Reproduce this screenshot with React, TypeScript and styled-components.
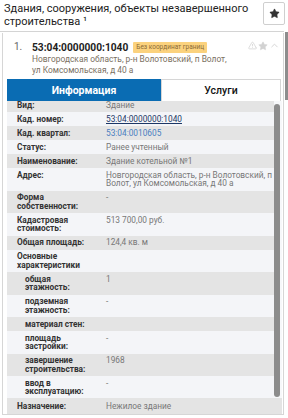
import React from 'react';
import styled, { createGlobalStyle } from 'styled-components';
import { Star, TriangleAlert, ChevronUp } from 'lucide-react';

const GlobalStyle = createGlobalStyle`
  html, body {
    margin: 0;
    padding: 0;
    background: #fff;
  }
  body {
    font-family: Roboto, "Open Sans", "DejaVu Sans", sans-serif;
    color: #222;
  }
`;

const Page = styled.div`
  width: 288px;
  height: 418px;
  overflow: hidden;
  background: #fff;
`;

const Header = styled.div`
  display: flex;
  align-items: flex-start;
  justify-content: space-between;
  padding: 3px 3px 0 4px;
  height: 28px;
`;

const Title = styled.div`
  font-size: 11px;
  line-height: 12.5px;
  color: #222;
  width: 252px;
`;

const FavButton = styled.button`
  width: 22px;
  height: 23px;
  margin-top: -1px;
  border: 1px solid #cfcfcf;
  border-radius: 2px;
  background: #fff;
  display: flex;
  align-items: center;
  justify-content: center;
  padding: 0;
  color: #333;
`;

const Body = styled.div`
  display: flex;
  border-top: 1px solid #d4d4d4;
  margin-right: 4px;
  position: relative;
`;

const PageThumb = styled.div`
  position: absolute;
  right: -4px;
  top: 0;
  width: 3px;
  height: 68px;
  background: #8d8d8d;
`;

const Card = styled.div`
  margin: 1px 0 0 2px;
  flex: 1;
  border: 1px solid #d6d6d6;
  border-top: 0;
  padding: 0 1px 1px 4px;
  height: 380px;
`;

const ItemHead = styled.div`
  display: flex;
  padding: 8px 0 0 7px;
`;

const Num = styled.div`
  width: 18px;
  font-size: 10px;
  line-height: 12px;
  color: #666;
`;

const ItemMain = styled.div`
  flex: 1;
`;

const TopLine = styled.div`
  display: flex;
  align-items: center;
  height: 12px;
`;

const CadNum = styled.span`
  font-size: 10.2px;
  font-weight: 700;
  color: #222;
`;

const Badge = styled.span`
  margin-left: 5px;
  background: #fbd27e;
  color: #8a6a36;
  font-size: 6.5px;
  line-height: 11px;
  height: 11px;
  padding: 0 3px;
  border-radius: 1px;
  white-space: nowrap;
`;

const Actions = styled.div`
  margin-left: auto;
  margin-top: -3px;
  display: flex;
  align-items: center;
  gap: 1px;
  color: #d2d2d2;
  padding-right: 2px;
`;

const Address = styled.div`
  margin-top: 1px;
  font-size: 8.4px;
  line-height: 10.5px;
  color: #7a705f;
  width: 195px;
`;

const Tabs = styled.div`
  display: flex;
  margin: 4px 1px 0 0;
  height: 22px;
`;

const Tab = styled.div<{ $active?: boolean }>`
  flex: ${p => (p.$active ? '0 0 154px' : '1')};
  display: flex;
  align-items: center;
  justify-content: center;
  font-size: 10.5px;
  font-weight: ${p => (p.$active ? 700 : 500)};
  color: ${p => (p.$active ? '#fff' : '#111')};
  background: ${p => (p.$active ? '#0a6cb3' : '#fff')};
  border: 1px solid ${p => (p.$active ? '#0a6cb3' : '#d6d6d6')};
  border-bottom: 0;
  box-sizing: border-box;
`;

const ScrollArea = styled.div`
  display: flex;
  height: 297px;
  overflow: hidden;
  background: #f4f5f8;
`;

const Viewport = styled.div`
  flex: 1;
  overflow: hidden;
`;

const RowList = styled.div`
  margin-top: -3px;
`;

const Track = styled.div`
  width: 8px;
  background: #f7f8fa;
  padding: 3px 0 1px;
  box-sizing: border-box;
`;

const Thumb = styled.div`
  width: 6px;
  height: 100%;
  background: #8c8c8c;
  border-radius: 3px;
`;

const Row = styled.div<{ $shade: boolean }>`
  display: grid;
  grid-template-columns: 99px 1fr;
  background: ${p => (p.$shade ? '#e4e4e4' : '#f4f5f8')};
  padding: 2.75px 0 2.75px 0;
  font-size: 8.3px;
  line-height: 8.5px;
`;

const Label = styled.div<{ $sub?: boolean }>`
  padding: 0 14px 0 ${p => (p.$sub ? 18 : 10)}px;
  font-weight: 700;
  color: #333;
`;

const Value = styled.div`
  color: #777;
`;

const CadLink = styled.span`
  color: #1c3766;
  text-decoration: underline;
`;

const BlockLink = styled.span`
  color: #4a7ec0;
`;

const LastRow = styled(Row)`
  padding-top: 3.5px;
  padding-bottom: 3.5px;
`;

type Field = { label: string; value: React.ReactNode; sub?: boolean };

const fields: Field[] = [
  { label: 'Вид:', value: 'Здание' },
  { label: 'Кад. номер:', value: <CadLink>53:04:0000000:1040</CadLink> },
  { label: 'Кад. квартал:', value: <BlockLink>53:04:0010605</BlockLink> },
  { label: 'Статус:', value: 'Ранее учтенный' },
  { label: 'Наименование:', value: 'Здание котельной №1' },
  { label: 'Адрес:', value: 'Новгородская область, р-н Волотовский, п Волот, ул Комсомольская, д 40 а' },
  { label: 'Форма собственности:', value: '-' },
  { label: 'Кадастровая стоимость:', value: '513 700,00 руб.' },
  { label: 'Общая площадь:', value: '124,4 кв. м' },
  { label: 'Основные характеристики', value: '' },
  { label: 'общая этажность:', value: '1', sub: true },
  { label: 'подземная этажность:', value: '-', sub: true },
  { label: 'материал стен:', value: '', sub: true },
  { label: 'площадь застройки:', value: '-', sub: true },
  { label: 'завершение строительства:', value: '1968', sub: true },
  { label: 'ввод в эксплуатацию:', value: '-', sub: true },
];

const App: React.FC = () => {
  return (
    <Page>
      <GlobalStyle />
      <Header>
        <Title>Здания, сооружения, объекты незавершенного строительства ¹</Title>
        <FavButton>
          <Star size={11} fill="#333" strokeWidth={1} />
        </FavButton>
      </Header>
      <Body>
        <PageThumb />
        <Card>
          <ItemHead>
            <Num>1.</Num>
            <ItemMain>
              <TopLine>
                <CadNum>53:04:0000000:1040</CadNum>
                <Badge>Без координат границ</Badge>
                <Actions>
                  <TriangleAlert size={9} strokeWidth={2} />
                  <Star size={10} fill="#d2d2d2" strokeWidth={1} />
                  <ChevronUp size={11} strokeWidth={2} />
                </Actions>
              </TopLine>
              <Address>Новгородская область, р-н Волотовский, п Волот, ул Комсомольская, д 40 а</Address>
            </ItemMain>
          </ItemHead>
          <Tabs>
            <Tab $active>Информация</Tab>
            <Tab>Услуги</Tab>
          </Tabs>
          <ScrollArea>
            <Viewport>
              <RowList>
                {fields.map((f, i) => (
                  <Row key={f.label} $shade={i % 2 === 0}>
                    <Label $sub={f.sub}>{f.label}</Label>
                    <Value>{f.value}</Value>
                  </Row>
                ))}
              </RowList>
            </Viewport>
            <Track>
              <Thumb />
            </Track>
          </ScrollArea>
          <LastRow $shade>
            <Label>Назначение:</Label>
            <Value>Нежилое здание</Value>
          </LastRow>
        </Card>
      </Body>
    </Page>
  );
};

export default App;
